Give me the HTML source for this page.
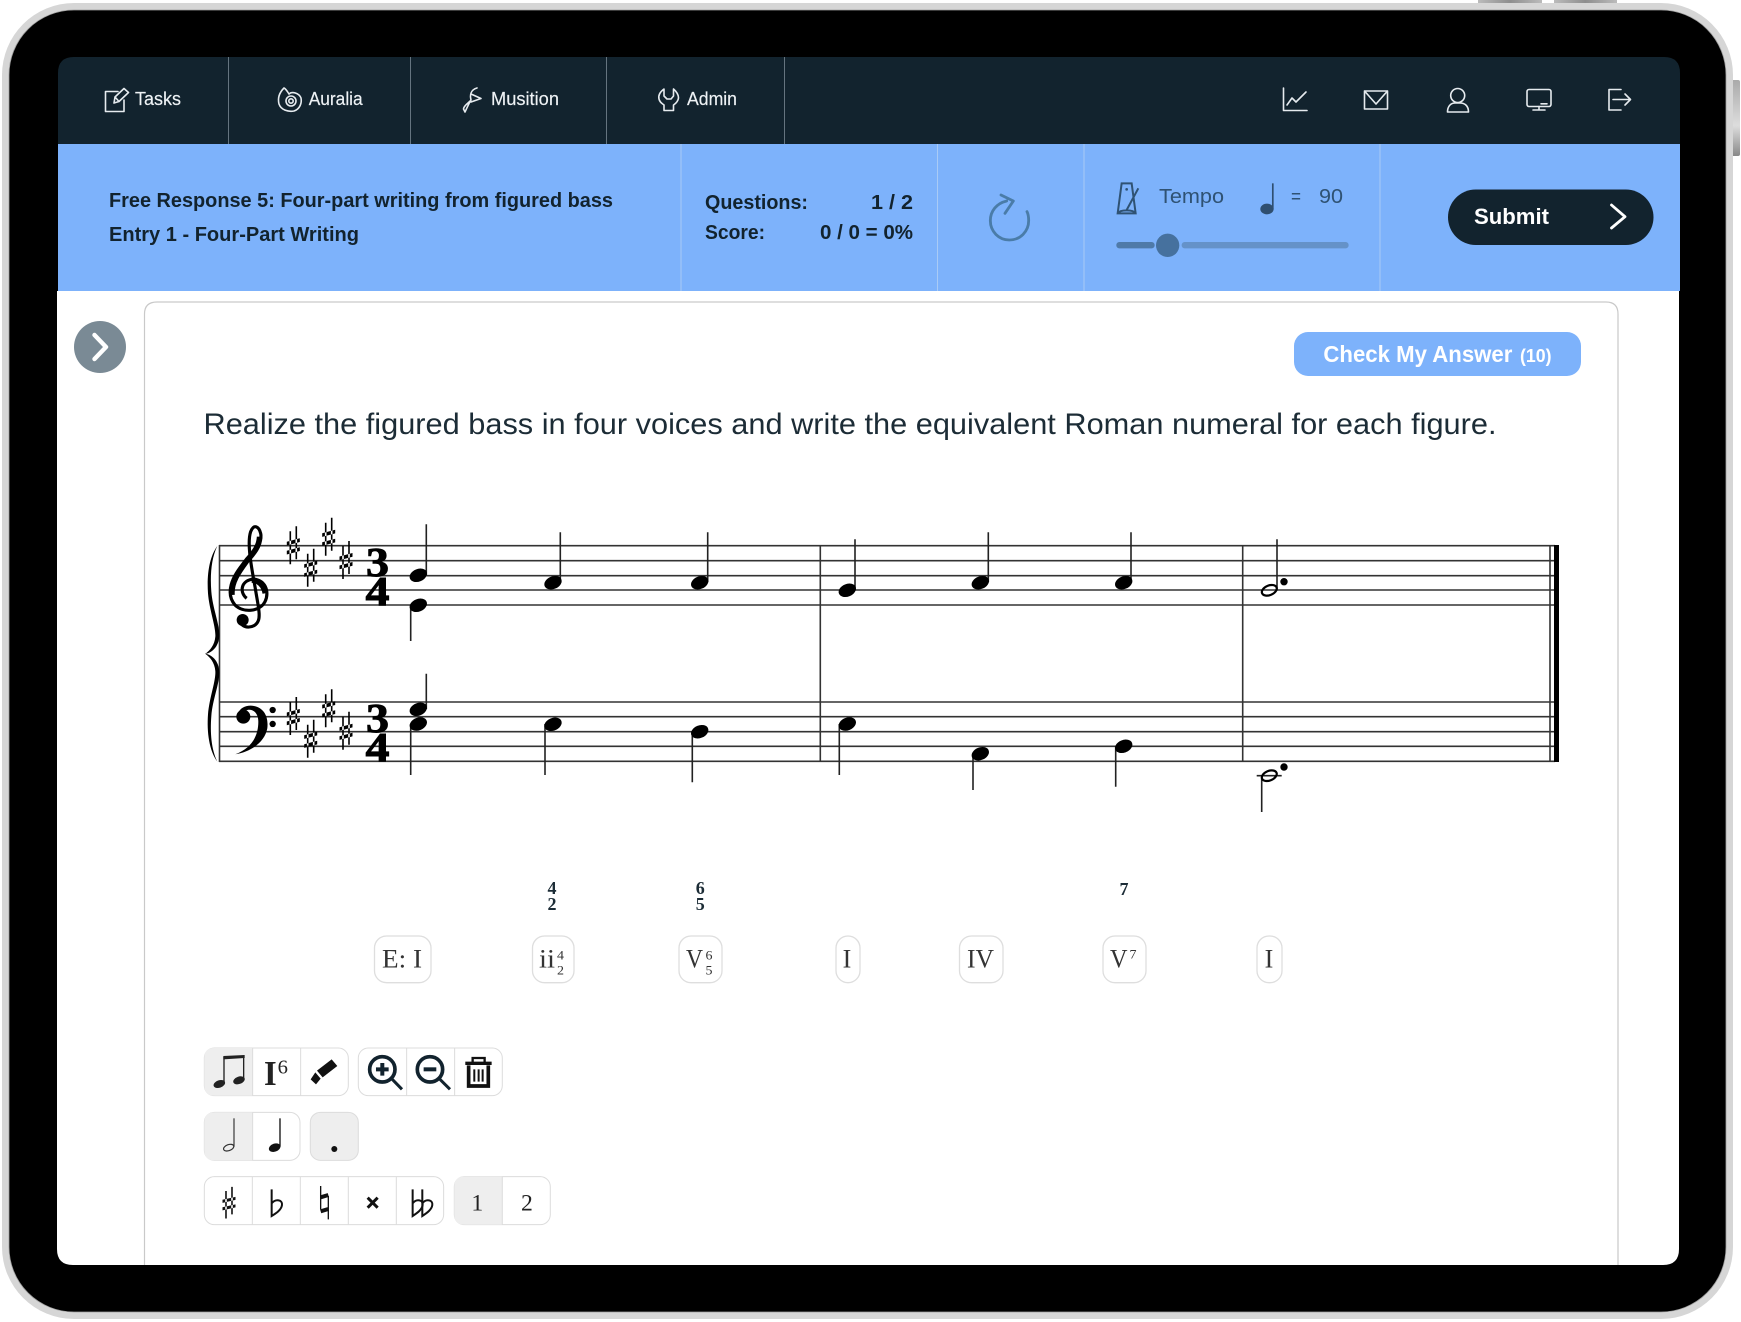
<!DOCTYPE html>
<html lang="en"><head><meta charset="utf-8"><title>Four-part writing</title>
<style>
html,body{margin:0;padding:0;background:#fff;width:1741px;height:1322px;overflow:hidden}
svg{display:block}
text{font-family:"Liberation Sans",sans-serif}
.s{font-family:"Liberation Serif",serif}
.nav{font-size:18px;fill:#eef2f5;stroke:#eef2f5;stroke-width:.15px}
.d{font-size:20px;font-weight:bold;fill:#12232e}
.t{font-size:20px;fill:#2f5273}
.i{fill:none;stroke:#e6ebef;stroke-width:1.6;stroke-linejoin:round;stroke-linecap:round}
.r{font-size:26px;fill:#333}
.sm{font-size:13px;fill:#333}
.fig{font-size:18px;font-weight:bold;fill:#1c2c36}
.bx{fill:#fff;stroke:#dedede;stroke-width:1.3}
.tb{fill:#fff;stroke:#dcdcdc;stroke-width:3}
.sp{stroke:#dcdcdc;stroke-width:3}
.st{stroke:#333;stroke-width:1.6}
.stem{stroke:#222;stroke-width:1.6}
.ts{font-size:41px;font-weight:bold;fill:#000;stroke:#000;stroke-width:.9px}
</style></head><body>
<svg width="1741" height="1322" viewBox="0 0 1741 1322" xmlns="http://www.w3.org/2000/svg">
<defs>
<linearGradient id="bt" x1="0" x2="1" y1="0" y2="0"><stop offset="0" stop-color="#bbb"/><stop offset=".5" stop-color="#8e8e8e"/><stop offset="1" stop-color="#bbb"/></linearGradient>
<linearGradient id="bs" x1="0" x2="0" y1="0" y2="1"><stop offset="0" stop-color="#aaa"/><stop offset=".6" stop-color="#ddd"/><stop offset="1" stop-color="#888"/></linearGradient>
</defs>
<rect width="1741" height="1322" fill="#fff"/>
<!-- device -->
<rect x="1478" y="0" width="64" height="5" fill="url(#bt)"/>
<rect x="1554" y="0" width="63" height="5" fill="url(#bt)"/>
<rect x="1730" y="80" width="10" height="76" rx="2" fill="url(#bs)"/>
<rect x="2" y="3" width="1731" height="1316" rx="72" fill="#d6d6d6"/>
<rect x="9" y="10" width="1717" height="1302" rx="65" fill="#000" stroke="#9f9f9f" stroke-width=".8"/>
<path d="M57,291H1679V1249Q1679,1265 1663,1265H73Q57,1265 57,1249Z" fill="#fff"/>
<path d="M58,144V73Q58,57 74,57H1664Q1680,57 1680,73V144Z" fill="#12232e"/>
<rect x="58" y="144" width="1622" height="147" fill="#7db2fb"/>
<!-- nav -->
<path d="M228.5,57V144M410.5,57V144M606.5,57V144M784.5,57V144" stroke="#65747f" stroke-width="1"/>
<text class="nav" x="135" y="105" textLength="46" lengthAdjust="spacingAndGlyphs">Tasks</text>
<text class="nav" x="308.7" y="105" textLength="54" lengthAdjust="spacingAndGlyphs">Auralia</text>
<text class="nav" x="491" y="105" textLength="68" lengthAdjust="spacingAndGlyphs">Musition</text>
<text class="nav" x="687" y="105" textLength="50" lengthAdjust="spacingAndGlyphs">Admin</text>
<path class="i" d="M118,91.5H105.5V111.5H124V100M114,103L115,97L124,88.5L128.5,92.5L119,101.5ZM115,97L119,101.5"/>
<path class="i" d="M284,88C278,94 278,100 279,104C281,110 288,112 294,111C300,109 302,103 301,98C299,93 292,91 289,94C287,91 286,89 284,88Z"/>
<circle class="i" cx="291" cy="101" r="5"/><circle class="i" cx="291" cy="101" r="2.2" stroke-width="1.2"/>
<path class="i" d="M477,88C470,90 470,96 471,100C469,103 464,105 463.5,109L465,112C467,108 468,105 471,100M471,94L481,98.5L471,102"/>
<path class="i" d="M664,89C660,92 658,95 659,99C660,103 663,104 664,105V110.5H673.5V105C675,104 678,102 678.5,98C678.5,95 677,92 673.5,89V96L671,99H667L664,96Z"/>
<path class="i" d="M1283.5,88V110.5H1307M1287,105L1292,98L1296,102L1306,92"/>
<path class="i" d="M1364.5,91H1387.5V109H1364.5ZM1364.5,91L1376,104L1387.5,91"/>
<circle class="i" cx="1457.7" cy="95.5" r="7"/>
<path class="i" d="M1447.5,112C1447.5,106 1451,103 1455,103H1460C1465,103 1468.5,106 1468.5,112Z"/>
<rect class="i" x="1527" y="89.5" width="24" height="17" rx="2"/>
<path class="i" d="M1539,106.5V109.5M1533,110H1545M1541,103.8H1547"/>
<path class="i" d="M1621,89.5H1609V110H1621M1613,99.5H1630M1625,94L1630.5,99.5L1625,105"/>
<!-- blue bar -->
<path d="M681,144V291M937.5,144V291M1084,144V291M1380,144V291" stroke="#a9cbf6" stroke-width="1"/>
<text class="d" x="109" y="207" textLength="504" lengthAdjust="spacingAndGlyphs">Free Response 5: Four-part writing from figured bass</text>
<text class="d" x="109" y="241" textLength="250" lengthAdjust="spacingAndGlyphs">Entry 1 - Four-Part Writing</text>
<text class="d" x="705" y="209" textLength="103" lengthAdjust="spacingAndGlyphs">Questions:</text>
<text class="d" x="871" y="209" textLength="42" lengthAdjust="spacingAndGlyphs">1 / 2</text>
<text class="d" x="705" y="239" textLength="60" lengthAdjust="spacingAndGlyphs">Score:</text>
<text class="d" x="820" y="239" textLength="93" lengthAdjust="spacingAndGlyphs">0 / 0 = 0%</text>
<g transform="translate(985,175) scale(.3333)">
<path d="M65,78C35,85 16,108 16,137C16,170 42,195 73,195C105,195 131,170 131,137C131,127 130,118 126,110M48,60L85,78L60,115" fill="none" stroke="#4a7ca8" stroke-width="8.5" stroke-linecap="round" stroke-linejoin="round"/>
<path d="M410,25H440L452,115H398ZM460,40L425,105M398,115C405,103 445,103 452,115" fill="none" stroke="#2f5273" stroke-width="6"/>
<circle cx="425" cy="43" r="4" fill="#2f5273"/>
<ellipse cx="846" cy="102" rx="20" ry="16" fill="#2f4f70"/><rect x="861" y="25" width="5" height="78" fill="#2f4f70"/>
<rect x="394" y="201" width="115" height="19" rx="9" fill="#4f7aa8"/>
<rect x="590" y="201" width="501" height="19" rx="9" fill="#6592c8"/>
<circle cx="548" cy="211" r="35" fill="#46719e"/>
</g>
<text class="t" x="1159" y="203" textLength="65" lengthAdjust="spacingAndGlyphs">Tempo</text>
<text class="t" x="1291" y="203" textLength="10" lengthAdjust="spacingAndGlyphs">=</text>
<text class="t" x="1319" y="203" textLength="24" lengthAdjust="spacingAndGlyphs">90</text>
<rect x="1448" y="189.5" width="205.5" height="55.5" rx="27.7" fill="#12232e"/>
<text x="1474" y="224" font-size="22" font-weight="bold" fill="#fff" textLength="75" lengthAdjust="spacingAndGlyphs">Submit</text>
<path d="M1611.5,205L1625,216.7L1611.5,228" fill="none" stroke="#fff" stroke-width="2.8" stroke-linecap="round" stroke-linejoin="round"/>
<!-- body -->
<circle cx="100" cy="347" r="26" fill="#7a8a95"/>
<path d="M94.5,335L106,347L94.5,359" fill="none" stroke="#fff" stroke-width="4.4" stroke-linecap="round" stroke-linejoin="round"/>
<path d="M144.5,1265V314Q144.5,302 157,302H1606Q1618,302 1618,314V1265" fill="none" stroke="#c9c9c9" stroke-width="1.2"/>
<rect x="1294" y="332" width="287" height="44" rx="14" fill="#7db2fb"/>
<text x="1323.4" y="362" font-size="23" font-weight="bold" fill="#fff" textLength="189" lengthAdjust="spacingAndGlyphs">Check My Answer</text>
<text x="1520" y="362" font-size="18" font-weight="bold" fill="#fff" textLength="31.5" lengthAdjust="spacingAndGlyphs">(10)</text>
<text x="203.5" y="434" font-size="30" fill="#1c2c36" textLength="1293" lengthAdjust="spacingAndGlyphs">Realize the figured bass in four voices and write the equivalent Roman numeral for each figure.</text>
<!-- staves -->
<path class="st" d="M219,545.7H1555M219,560.7H1555M219,575.7H1555M219,590H1555M219,605H1555M219,702H1555M219,716.7H1555M219,731.7H1555M219,746.3H1555M219,761.3H1555" fill="none"/>
<path class="st" d="M219.5,545V762M820.3,545V762M1242.7,545V762M1550,545V762" fill="none"/>
<rect x="1554" y="545" width="5" height="217" fill="#000"/>
<g transform="translate(190,500) scale(.3333)">
<path d="M82,138C58,170 50,225 54,280C58,330 78,380 76,410C74,435 60,452 45,462C70,458 88,435 88,405C88,370 68,325 64,275C60,225 64,175 82,138Z" fill="#000"/>
<path d="M82,785C58,753 50,698 54,643C58,593 78,543 76,513C74,488 60,471 45,461C70,465 88,488 88,518C88,553 68,598 64,648C60,698 64,748 82,785Z" fill="#000"/>
<path d="M170,295C150,280 150,245 185,238C225,235 240,275 225,305C210,335 160,340 135,315C105,280 125,230 165,185C195,150 218,125 212,100C207,80 192,70 182,95C172,125 180,180 195,260C203,310 212,345 205,362C195,390 150,385 152,362" fill="none" stroke="#000" stroke-width="9.5"/>
<path d="M126,285C122,245 150,210 172,180C190,160 208,140 209,110M226,280C222,255 205,240 185,240" fill="none" stroke="#000" stroke-width="17"/>
<circle cx="158" cy="360" r="18" fill="#000"/>
<path d="M136,763C182,745 205,712 205,665C205,640 190,626 172,630L145,640C150,622 172,614 192,618C222,624 236,650 232,685C225,725 185,755 136,763Z" fill="#000"/>
<circle cx="160" cy="650" r="21" fill="#000"/>
<circle cx="248" cy="630" r="9.5" fill="#000"/><circle cx="248" cy="672" r="9.5" fill="#000"/>
</g>
<path transform="translate(293.3,545.3)" d="M-3.8-14h1.6v33h-1.6zM2.2-19h1.6v33h-1.6zM-6.5.2L6.5-3.3V-7L-6.5-3.5zM-6.5 9.2L6.5 5.7V2L-6.5 5.5z"/>
<path transform="translate(310.7,567.7)" d="M-3.8-14h1.6v33h-1.6zM2.2-19h1.6v33h-1.6zM-6.5.2L6.5-3.3V-7L-6.5-3.5zM-6.5 9.2L6.5 5.7V2L-6.5 5.5z"/>
<path transform="translate(328.7,536.7)" d="M-3.8-14h1.6v33h-1.6zM2.2-19h1.6v33h-1.6zM-6.5.2L6.5-3.3V-7L-6.5-3.5zM-6.5 9.2L6.5 5.7V2L-6.5 5.5z"/>
<path transform="translate(346,560)" d="M-3.8-14h1.6v33h-1.6zM2.2-19h1.6v33h-1.6zM-6.5.2L6.5-3.3V-7L-6.5-3.5zM-6.5 9.2L6.5 5.7V2L-6.5 5.5z"/>
<path transform="translate(293.3,716)" d="M-3.8-14h1.6v33h-1.6zM2.2-19h1.6v33h-1.6zM-6.5.2L6.5-3.3V-7L-6.5-3.5zM-6.5 9.2L6.5 5.7V2L-6.5 5.5z"/>
<path transform="translate(310.7,738.7)" d="M-3.8-14h1.6v33h-1.6zM2.2-19h1.6v33h-1.6zM-6.5.2L6.5-3.3V-7L-6.5-3.5zM-6.5 9.2L6.5 5.7V2L-6.5 5.5z"/>
<path transform="translate(328.7,708.3)" d="M-3.8-14h1.6v33h-1.6zM2.2-19h1.6v33h-1.6zM-6.5.2L6.5-3.3V-7L-6.5-3.5zM-6.5 9.2L6.5 5.7V2L-6.5 5.5z"/>
<path transform="translate(346,730.7)" d="M-3.8-14h1.6v33h-1.6zM2.2-19h1.6v33h-1.6zM-6.5.2L6.5-3.3V-7L-6.5-3.5zM-6.5 9.2L6.5 5.7V2L-6.5 5.5z"/>
<text class="s ts" x="366" y="576" textLength="23" lengthAdjust="spacingAndGlyphs">3</text>
<text class="s ts" x="365.5" y="605" textLength="24" lengthAdjust="spacingAndGlyphs">4</text>
<text class="s ts" x="366" y="732" textLength="23" lengthAdjust="spacingAndGlyphs">3</text>
<text class="s ts" x="365.5" y="761" textLength="24" lengthAdjust="spacingAndGlyphs">4</text>
<!-- stems -->
<path class="stem" fill="none" d="M426.3,524.3V575M410.7,605V641M560.3,532.3V582M707.7,532.3V582M855,539.3V590M988.3,532.3V582M1131,532.3V582M1277,539.3V590M426.3,673.7V709M410.7,724V775M545,724V775M692.3,732V782.3M839.3,724V775M973,754V790M1115.7,746V786.7M1261.7,776V812M1256.7,775.7H1281.7"/>
<!-- heads -->
<g fill="#000">
<ellipse cx="418.3" cy="575.3" rx="9" ry="6.3" transform="rotate(-22 418.3 575.3)"/>
<ellipse cx="418.3" cy="605.3" rx="9" ry="6.3" transform="rotate(-22 418.3 605.3)"/>
<ellipse cx="553" cy="582.7" rx="9" ry="6.3" transform="rotate(-22 553 582.7)"/>
<ellipse cx="699.7" cy="582.7" rx="9" ry="6.3" transform="rotate(-22 699.7 582.7)"/>
<ellipse cx="847.3" cy="590.3" rx="9" ry="6.3" transform="rotate(-22 847.3 590.3)"/>
<ellipse cx="980.3" cy="582.7" rx="9" ry="6.3" transform="rotate(-22 980.3 582.7)"/>
<ellipse cx="1123.7" cy="582.7" rx="9" ry="6.3" transform="rotate(-22 1123.7 582.7)"/>
<ellipse cx="418.3" cy="709.3" rx="9" ry="6.3" transform="rotate(-22 418.3 709.3)"/>
<ellipse cx="418.3" cy="724" rx="9" ry="6.3" transform="rotate(-22 418.3 724)"/>
<ellipse cx="553" cy="724.3" rx="9" ry="6.3" transform="rotate(-22 553 724.3)"/>
<ellipse cx="699.7" cy="731.7" rx="9" ry="6.3" transform="rotate(-22 699.7 731.7)"/>
<ellipse cx="847.3" cy="724" rx="9" ry="6.3" transform="rotate(-22 847.3 724)"/>
<ellipse cx="980.3" cy="753.7" rx="9" ry="6.3" transform="rotate(-22 980.3 753.7)"/>
<ellipse cx="1123.7" cy="746.3" rx="9" ry="6.3" transform="rotate(-22 1123.7 746.3)"/>
<circle cx="1284" cy="581.7" r="3.7"/><circle cx="1284" cy="767" r="3.7"/>
</g>
<g fill="none" stroke="#000" stroke-width="2.2">
<ellipse cx="1269.3" cy="590.3" rx="7.8" ry="4.8" transform="rotate(-22 1269.3 590.3)"/>
<ellipse cx="1269.3" cy="775.7" rx="7.8" ry="4.8" transform="rotate(-22 1269.3 775.7)"/>
</g>
<!-- figures -->
<g text-anchor="middle">
<text class="s fig" x="552" y="894">4</text><text class="s fig" x="552" y="910">2</text>
<text class="s fig" x="700.3" y="894">6</text><text class="s fig" x="700.3" y="910">5</text>
<text class="s fig" x="1124" y="895">7</text>
</g>
<!-- roman -->
<rect class="bx" x="374.5" y="936" width="56.5" height="46.7" rx="12"/>
<rect class="bx" x="532.5" y="936" width="41.5" height="46.7" rx="12"/>
<rect class="bx" x="679" y="936" width="43" height="46.7" rx="12"/>
<rect class="bx" x="836" y="936" width="24" height="46.7" rx="12"/>
<rect class="bx" x="959.5" y="936" width="43.5" height="46.7" rx="12"/>
<rect class="bx" x="1103" y="936" width="43" height="46.7" rx="12"/>
<rect class="bx" x="1257" y="936" width="25" height="46.7" rx="12"/>
<text class="s r" x="382" y="967.5" textLength="40" lengthAdjust="spacingAndGlyphs">E: I</text>
<text class="s r" x="539" y="967.5" textLength="16" lengthAdjust="spacingAndGlyphs">ii</text>
<text class="s sm" x="557" y="959.5" textLength="7" lengthAdjust="spacingAndGlyphs">4</text><text class="s sm" x="557" y="974.5" textLength="7" lengthAdjust="spacingAndGlyphs">2</text>
<text class="s r" x="686" y="967.5" textLength="17" lengthAdjust="spacingAndGlyphs">V</text>
<text class="s sm" x="705.5" y="959.5" textLength="7" lengthAdjust="spacingAndGlyphs">6</text><text class="s sm" x="705.5" y="974.5" textLength="7" lengthAdjust="spacingAndGlyphs">5</text>
<text class="s r" x="847" y="967.5" text-anchor="middle">I</text>
<text class="s r" x="967" y="967.5" textLength="27" lengthAdjust="spacingAndGlyphs">IV</text>
<text class="s r" x="1110" y="967.5" textLength="17.5" lengthAdjust="spacingAndGlyphs">V</text>
<text class="s sm" x="1129.5" y="958.5" textLength="7" lengthAdjust="spacingAndGlyphs">7</text>
<text class="s r" x="1269" y="967.5" text-anchor="middle">I</text>
<!-- toolbar -->
<g transform="translate(190,1030) scale(.3333)">
<rect class="tb" x="43" y="54" width="432" height="143" rx="30"/>
<path d="M188,54H73Q43,54 43,84V167Q43,197 73,197H188Z" fill="#eee"/>
<path class="sp" d="M188,54V197M332,54V197"/>
<rect class="tb" x="505" y="54" width="432" height="143" rx="30"/>
<path class="sp" d="M650,54V197M794,54V197"/>
<rect class="tb" x="43" y="247" width="287" height="144" rx="30"/>
<path d="M188,247H73Q43,247 43,277V361Q43,391 73,391H188Z" fill="#eee"/>
<path class="sp" d="M188,247V391"/>
<rect x="361" y="247" width="144" height="144" rx="30" fill="#eee" stroke="#dcdcdc" stroke-width="3"/>
<rect class="tb" x="43" y="440" width="718" height="144" rx="30"/>
<path class="sp" d="M187,440V584M331,440V584M475,440V584M619,440V584"/>
<rect class="tb" x="793" y="440" width="288" height="144" rx="30"/>
<path d="M937,440H823Q793,440 793,470V554Q793,584 823,584H937Z" fill="#eee"/>
<path class="sp" d="M937,440V584"/>
<!-- beamed -->
<ellipse cx="88" cy="162" rx="18" ry="11" transform="rotate(-20 88 162)" fill="#222"/>
<ellipse cx="147" cy="151" rx="18" ry="11" transform="rotate(-20 147 151)" fill="#222"/>
<path d="M102,158V81M161,148V76" stroke="#222" stroke-width="4"/>
<path d="M100,78L164,75V84L100,88Z" fill="#222"/>
<text class="s" x="222" y="165" font-size="106" font-weight="bold" fill="#222" textLength="38" lengthAdjust="spacingAndGlyphs">I</text>
<text class="s" x="263" y="130" font-size="60" fill="#222" textLength="31" lengthAdjust="spacingAndGlyphs">6</text>
<path d="M425,88L442,108L398,142L381,122ZM376,127L392,146L378,163L362,148Z" fill="#111"/>
<g fill="none" stroke="#12232e" stroke-linecap="butt">
<circle cx="577" cy="118" r="38" stroke-width="11"/><path d="M558,118H596M577,99V137" stroke-width="12"/><path d="M605,146L636,178" stroke-width="9"/>
<circle cx="720" cy="118" r="38" stroke-width="11"/><path d="M701,118H739" stroke-width="12"/><path d="M748,146L780,178" stroke-width="9"/>
</g>
<g fill="none" stroke="#111">
<path d="M826,100H905" stroke-width="10"/><path d="M848,97V84H884V97" stroke-width="7"/>
<path d="M836,106V168H895V106" stroke-width="11"/><path d="M853,118V155M866,118V155M878,118V155" stroke-width="6"/>
</g>
<!-- values -->
<ellipse cx="116" cy="353" rx="16" ry="9" transform="rotate(-20 116 353)" fill="none" stroke="#333" stroke-width="3.5"/>
<path d="M132,265V350" stroke="#333" stroke-width="3.5"/>
<ellipse cx="254" cy="353" rx="18" ry="12" transform="rotate(-20 254 353)" fill="#111"/>
<path d="M270,265V350" stroke="#111" stroke-width="4"/>
<circle cx="433" cy="357" r="9" fill="#111"/>
<!-- accidentals -->
<path transform="translate(117,518) scale(3,2.5)" d="M-3.8-14h1.6v33h-1.6zM2.2-19h1.6v33h-1.6zM-6.5.2L6.5-3.3V-7L-6.5-3.5zM-6.5 9.2L6.5 5.7V2L-6.5 5.5z" fill="#111"/>
<g fill="none" stroke="#111">
<path d="M245,478V558C258,550 274,540 276,525C278,510 258,505 245,520" stroke-width="6"/>
<path d="M392,468V538M415,498V568" stroke-width="4"/>
<path d="M392,502L415,495M392,544L415,537" stroke-width="12"/>
<path d="M533,503L563,533M563,503L533,533" stroke-width="9"/>
<path d="M668,478V558C680,550 696,540 698,525C700,510 680,505 668,520" stroke-width="6"/>
<path d="M697,478V558C709,550 725,540 727,525C729,510 709,505 697,520" stroke-width="6"/>
</g>
<g text-anchor="middle"><text class="s" x="862" y="542" font-size="71" fill="#222">1</text><text class="s" x="1011" y="542" font-size="71" fill="#222">2</text></g>
</g>
</svg>
</body></html>
